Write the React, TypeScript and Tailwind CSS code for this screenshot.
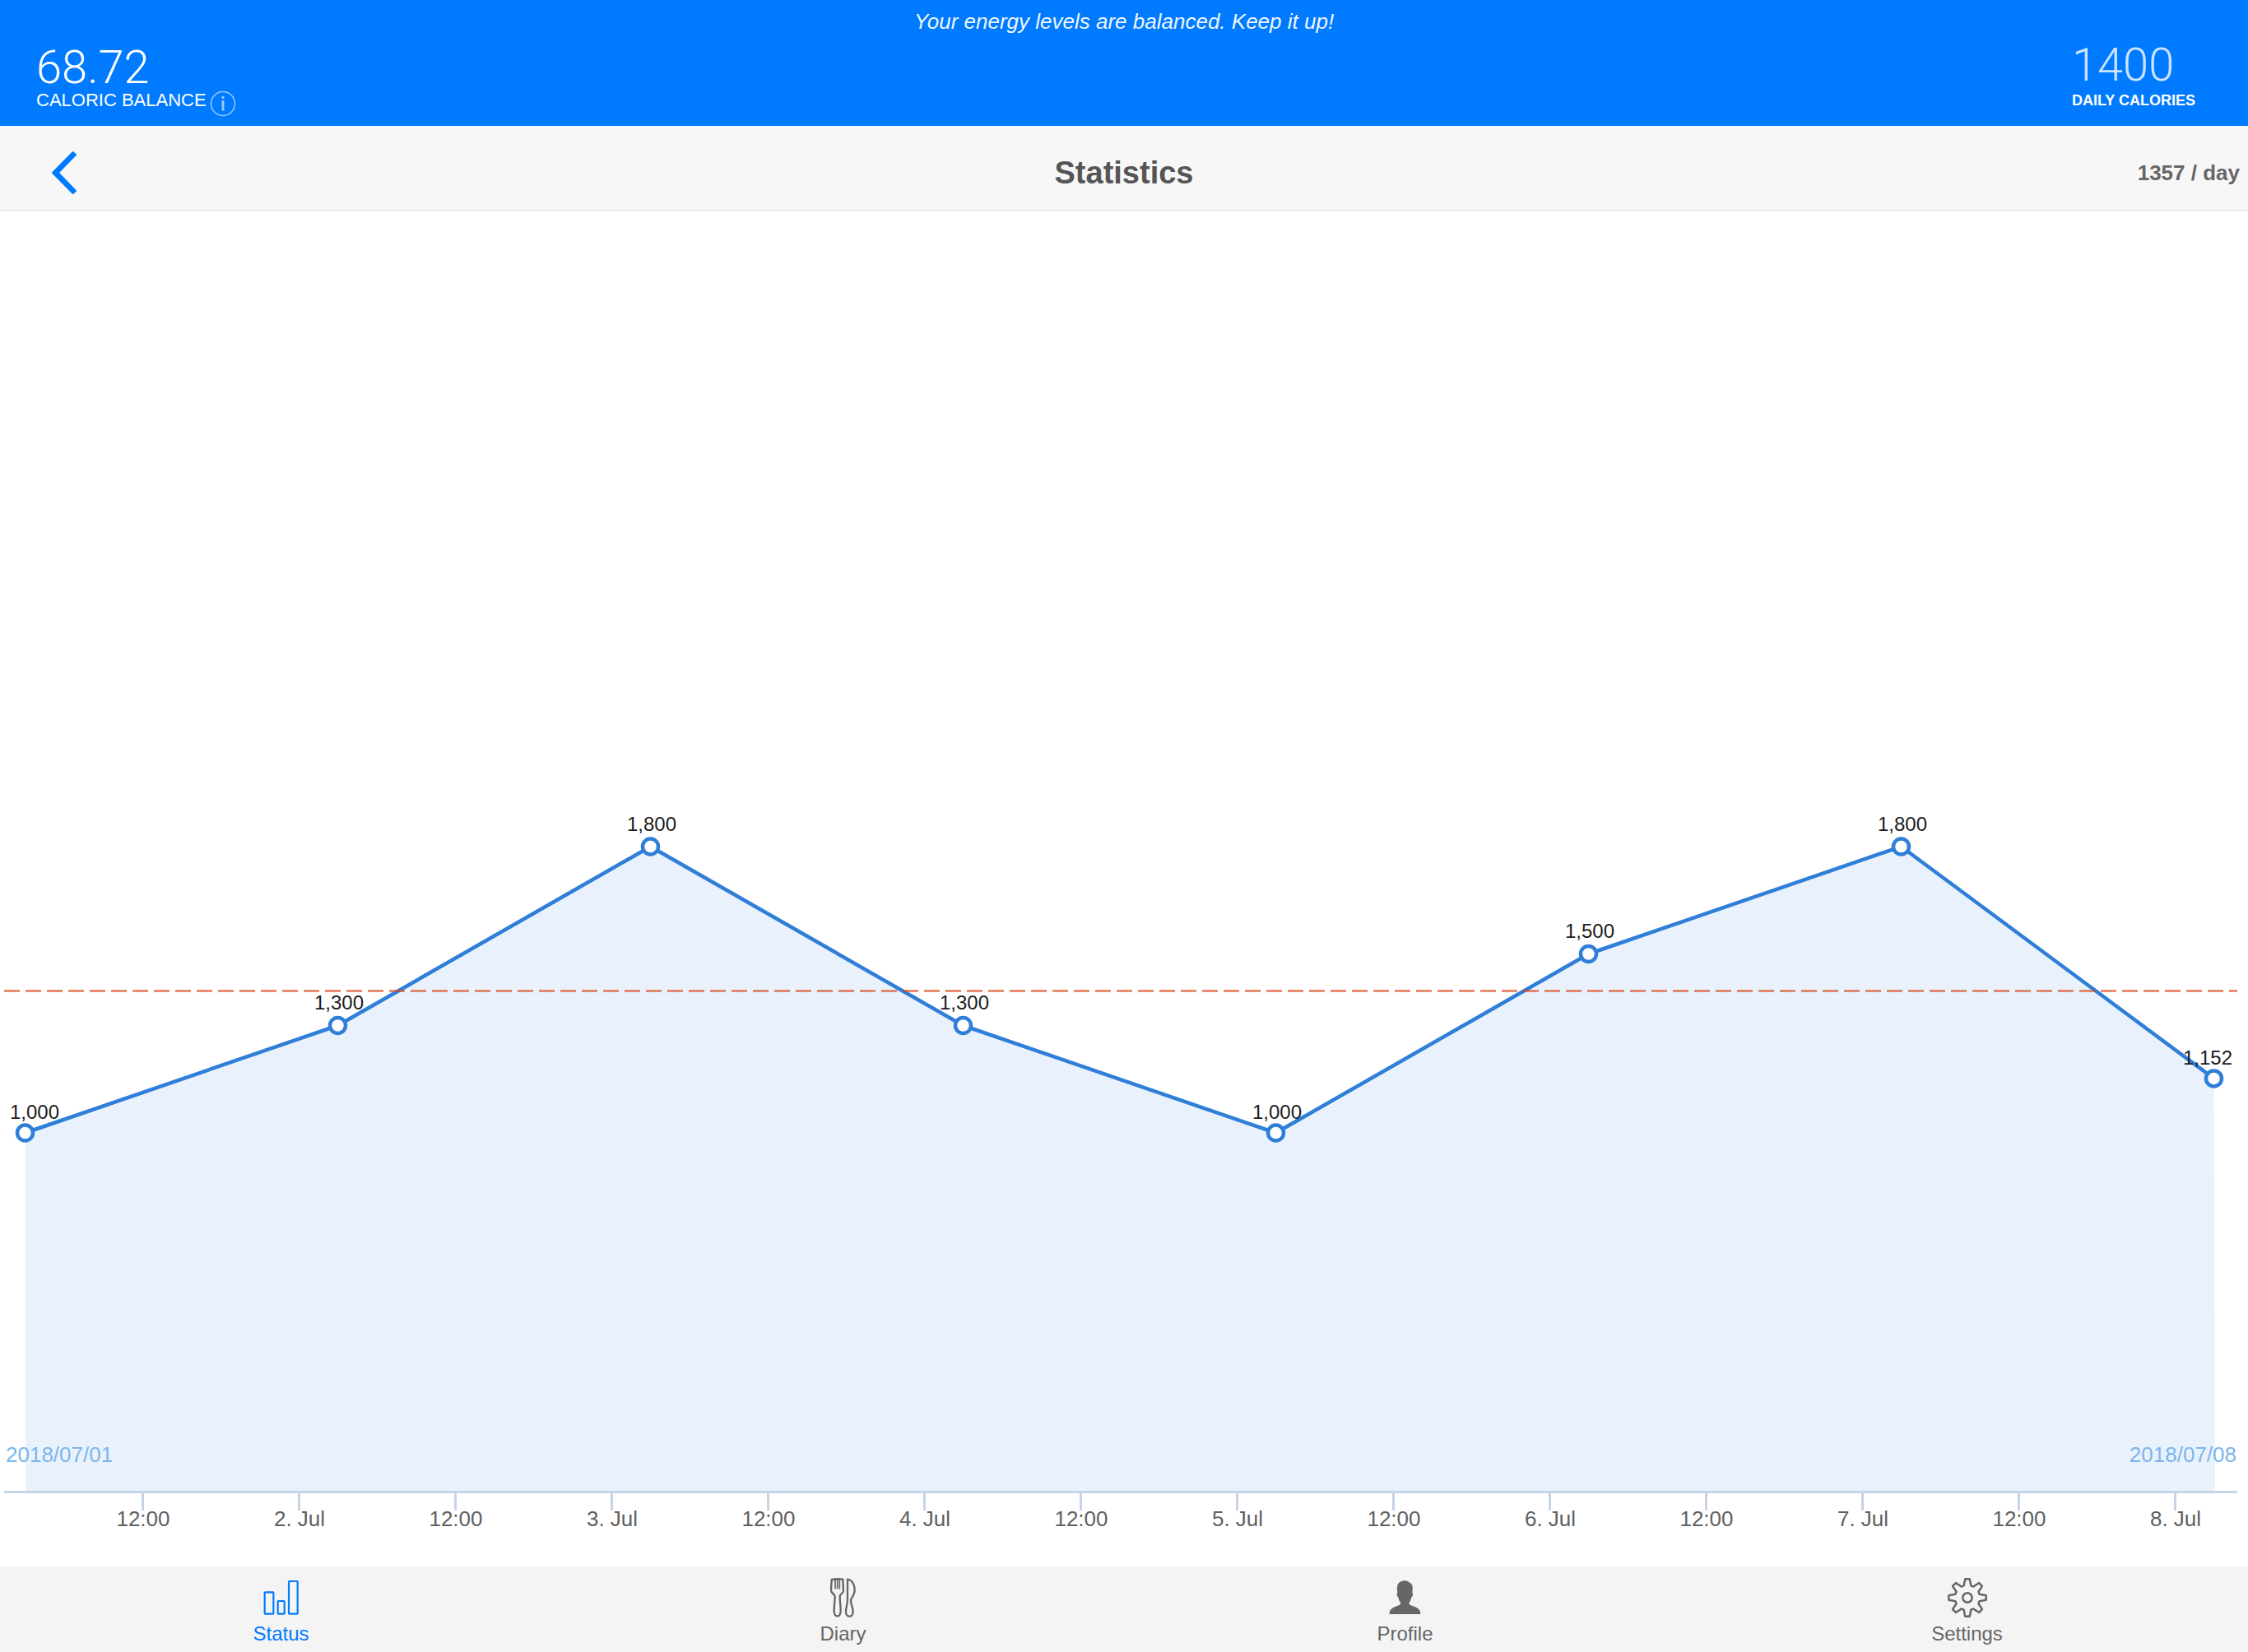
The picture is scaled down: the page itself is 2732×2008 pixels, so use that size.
import type { ReactNode } from 'react';

const days = [
  { value: 1000, label: '1,000', labelX: 42, labelY: 1103 },
  { value: 1300, label: '1,300', labelX: 412, labelY: 970 },
  { value: 1800, label: '1,800', labelX: 792, labelY: 753 },
  { value: 1300, label: '1,300', labelX: 1172, labelY: 970 },
  { value: 1000, label: '1,000', labelX: 1552, labelY: 1103 },
  { value: 1500, label: '1,500', labelX: 1932, labelY: 883 },
  { value: 1800, label: '1,800', labelX: 2312, labelY: 753 },
  { value: 1152, label: '1,152', labelX: 2683, labelY: 1037 },
];

const ticks = [
  '12:00', '2. Jul', '12:00', '3. Jul', '12:00', '4. Jul', '12:00',
  '5. Jul', '12:00', '6. Jul', '12:00', '7. Jul', '12:00', '8. Jul',
];

const xOf = (i: number) => 30.5 + i * 380;
const yOf = (value: number) => 1120 - (value - 1000) * 0.435;

function CalorieChart() {
  const points = days.map((d, i) => `${xOf(i)},${yOf(d.value)}`).join(' ');
  return (
    <svg viewBox="0 0 2732 1647" className="block h-auto w-full" role="img" aria-label="Daily calories">
      <polygon points={`31,1555 ${points} 2692,1555`} fill="#e9f2fc" />
      <polyline points={points} fill="none" stroke="#2f7ed8" strokeWidth="4.5" strokeLinejoin="round" />
      <line x1="5" x2="2719" y1="947.5" y2="947.5" stroke="#da4416" strokeOpacity="0.72" strokeWidth="2.6" strokeDasharray="19 7" />
      <line x1="5" x2="2719" y1="1556.5" y2="1556.5" stroke="#c6d4e5" strokeWidth="3" />
      {days.map((d, i) => (
        <circle key={i} cx={xOf(i)} cy={yOf(d.value)} r="9.5" fill="#fff" stroke="#2f7ed8" strokeWidth="4.5" />
      ))}
      <g fontSize="24" fill="#1c1c1c" textAnchor="middle">
        {days.map((d, i) => (
          <text key={i} x={d.labelX} y={d.labelY}>{d.label}</text>
        ))}
      </g>
      {ticks.map((t, i) => (
        <g key={i}>
          <line x1={173.5 + i * 190} x2={173.5 + i * 190} y1="1557" y2="1579" stroke="#c6d4e5" strokeWidth="3" />
          <text x={174 + i * 190} y="1598" fontSize="26" fill="#606060" textAnchor="middle">{t}</text>
        </g>
      ))}
      <g fontSize="26" fill="#7cb5ec">
        <text x="7" y="1520">2018/07/01</text>
        <text x="2718" y="1520" textAnchor="end">2018/07/08</text>
      </g>
    </svg>
  );
}

function StatusIcon() {
  return (
    <svg viewBox="0 0 144 144" className="size-12" fill="none" stroke="currentColor" strokeWidth="6.5">
      <rect x="11" y="52" width="32" height="79" rx="2" />
      <rect x="59" y="84" width="24" height="47" rx="2" />
      <rect x="99" y="12" width="32" height="119" rx="2" />
    </svg>
  );
}

function DiaryIcon() {
  return (
    <svg viewBox="0 0 144 144" className="size-12" fill="none" stroke="currentColor" strokeWidth="7" strokeLinejoin="round" strokeLinecap="round">
      <path d="M29 6Q50 2 70 5L72 46C72 56 59 59 59 67C59 84 62 104 62 119C62 146 38 146 38 119C38 104 41 84 41 67C41 59 27 56 27 46Z" />
      <path d="M42 5V38M50 5V38M58 5V38" strokeWidth="5" />
      <path d="M87 5C106 8 113 28 113 44C113 60 103 70 99 80C98 95 107 108 107 122C107 146 81 146 81 122C81 108 87 95 87 80Z" />
    </svg>
  );
}

function ProfileIcon() {
  return (
    <svg viewBox="0 0 144 144" className="size-12" fill="currentColor">
      <path d="M14 132C13 116 24 109 40 103C49 100 55 97 55 91C50 85 47 78 46 70C41 68 40 58 43 53C40 35 42 21 52 15C64 7 80 9 87 17C98 19 100 34 97 53C101 58 99 68 94 70C93 78 90 85 85 91C85 97 91 100 100 103C116 109 128 116 127 132Z" />
    </svg>
  );
}

const gearPath = (() => {
  const tooth = [[-13, -44], [-10, -60], [-8, -68], [8, -68], [10, -60], [13, -44]];
  const pts: string[] = [];
  for (let i = 0; i < 8; i++) {
    const a = (i * Math.PI) / 4;
    for (const [x, y] of tooth) {
      const px = 72 + x * Math.cos(a) - y * Math.sin(a);
      const py = 72 + x * Math.sin(a) + y * Math.cos(a);
      pts.push(`${px.toFixed(1)} ${py.toFixed(1)}`);
    }
  }
  return `M${pts.join('L')}Z`;
})();

function SettingsIcon() {
  return (
    <svg viewBox="0 0 144 144" className="size-12" fill="none" stroke="currentColor" strokeWidth="7.5" strokeLinejoin="round">
      <path d={gearPath} />
      <circle cx="72" cy="72" r="17" />
    </svg>
  );
}

function Tab({ label, active, children }: { label: string; active?: boolean; children: ReactNode }) {
  return (
    <button
      type="button"
      aria-current={active ? 'page' : undefined}
      className={`flex flex-col items-center pt-3.5 pb-0.5 text-2xl leading-10 ${active ? 'text-[#007aff]' : 'text-[#666]'}`}
    >
      {children}
      <span>{label}</span>
    </button>
  );
}

export default function App() {
  return (
    <div className="flex min-h-screen flex-col bg-white font-['Liberation_Sans',Arial,sans-serif]">
      <header className="bg-[#007aff] pt-2 pb-[11px] text-white">
        <p className="text-center text-[26px] leading-9 text-white/95 italic">Your energy levels are balanced. Keep it up!</p>
        <div className="flex items-start justify-between pt-3 pr-16 pl-11">
          <div>
            <div className="font-['Roboto',sans-serif] text-[56px] leading-[52px] font-light">68.72</div>
            <div className="flex items-start gap-1">
              <span className="text-[22px] leading-7">CALORIC BALANCE</span>
              <button type="button" aria-label="About caloric balance" className="pt-0.5">
                <svg viewBox="0 0 32 32" className="size-8" fill="none" stroke="#fff" strokeOpacity="0.6">
                  <circle cx="16" cy="16" r="14.5" strokeWidth="1.5" />
                  <path d="M16 12V24.5" strokeWidth="3" />
                  <path d="M16 7V10" strokeWidth="3" />
                </svg>
              </button>
            </div>
          </div>
          <div>
            <div className="font-['Roboto',sans-serif] text-[56px] leading-[46px] font-light text-white/80">1400</div>
            <div className="text-lg leading-10 font-bold">DAILY CALORIES</div>
          </div>
        </div>
      </header>

      <nav className="grid h-26 grid-cols-3 items-center border-b-2 border-[#ebebeb] bg-[#f7f7f7]">
        <button type="button" aria-label="Back" className="mt-3 ml-14 justify-self-start p-1">
          <svg viewBox="180 547 108 168" className="h-14 w-9" fill="#007aff" stroke="#007aff" strokeWidth="6" strokeLinejoin="round">
            <path d="M192 631L266 556L276 565L212 631L276 697L266 706Z" />
          </svg>
        </button>
        <h1 className="justify-self-center pt-3 text-[38px] leading-12 font-bold text-[#555]">Statistics</h1>
        <div className="justify-self-end pt-3 pr-2.5 text-[26px] leading-9 font-bold text-[#666]">1357 / day</div>
      </nav>

      <main className="flex-1">
        <CalorieChart />
      </main>

      <footer className="grid grid-cols-4 bg-[#f4f4f4]">
        <Tab label="Status" active><StatusIcon /></Tab>
        <Tab label="Diary"><DiaryIcon /></Tab>
        <Tab label="Profile"><ProfileIcon /></Tab>
        <Tab label="Settings"><SettingsIcon /></Tab>
      </footer>
    </div>
  );
}
